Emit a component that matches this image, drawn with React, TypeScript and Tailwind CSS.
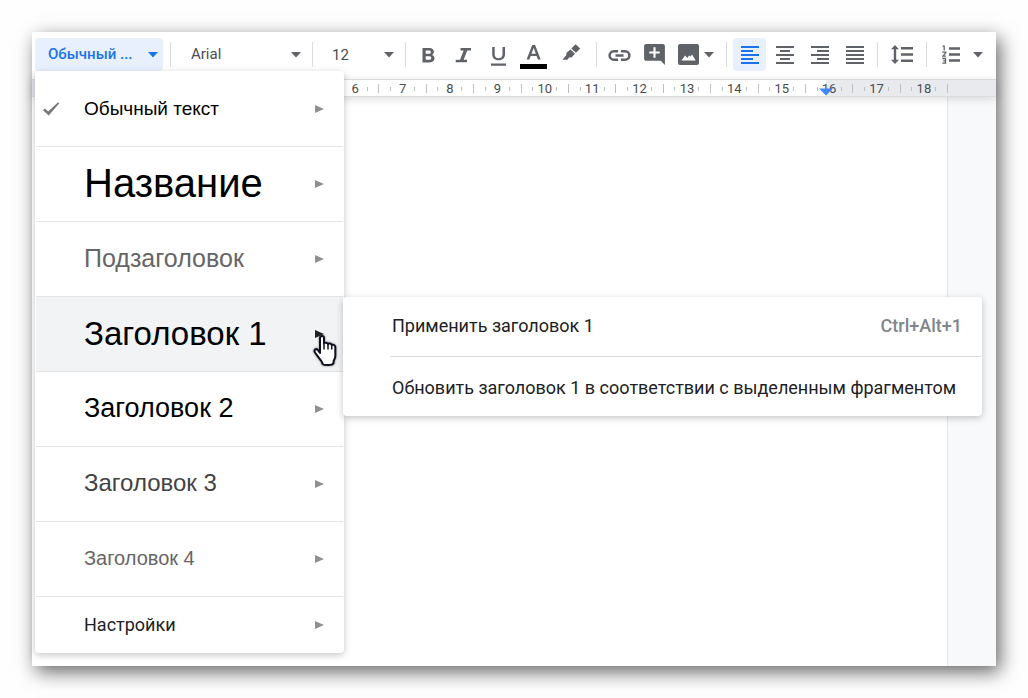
import { useState } from "react";
import type { ReactNode } from "react";
import {
  MdAddComment,
  MdFormatAlignCenter,
  MdFormatAlignJustify,
  MdFormatAlignLeft,
  MdFormatAlignRight,
} from "react-icons/md";

function Caret({ className = "" }: { className?: string }) {
  return (
    <svg width="10" height="6" viewBox="0 0 10 6" className={`shrink-0 ${className}`} aria-hidden="true">
      <path d="M0 0h10L5 5.5z" fill="currentColor" />
    </svg>
  );
}

function Divider() {
  return <span className="h-[25px] w-px shrink-0 bg-[#dadce0]" />;
}

function Group({ label, children }: { label: string; children: ReactNode }) {
  return (
    <div role="group" aria-label={label} className="flex shrink-0 gap-0.5 px-1.5">
      {children}
    </div>
  );
}

function Tool({
  label,
  active = false,
  size = "w-[33px] justify-center",
  children,
}: {
  label: string;
  active?: boolean;
  size?: string;
  children: ReactNode;
}) {
  return (
    <button
      type="button"
      aria-label={label}
      aria-pressed={active}
      className={`flex h-[33px] shrink-0 items-center rounded-sm ${size} ${
        active ? "bg-[#e8f0fe] text-[#1a73e8]" : ""
      }`}
    >
      {children}
    </button>
  );
}

function BoldIcon() {
  return (
    <svg width="24" height="24" viewBox="0 0 24 24" fill="currentColor" aria-hidden="true">
      <path
        fillRule="evenodd"
        d="M5.500 5h7c2.600 0 4.400 1.500 4.400 3.800 0 1.400-.7 2.500-1.800 3.100 1.500.6 2.400 1.800 2.400 3.400 0 2.500-1.900 4.100-4.800 4.100H5.500zm3.200 2.600v3.200h3.400c1.100 0 1.700-.6 1.700-1.600s-.6-1.600-1.700-1.600zm0 5.600v3.600h3.700c1.200 0 1.900-.7 1.900-1.800s-.7-1.800-1.900-1.800z"
      />
    </svg>
  );
}

function ItalicIcon() {
  return (
    <svg width="24" height="24" viewBox="0 0 24 24" fill="currentColor" aria-hidden="true">
      <path d="M8.500 5H19v2.500h-3.800l-3.500 9.300H15v2.500H3.700v-2.500h4.400l3.500-9.300H8.500z" />
    </svg>
  );
}

function UnderlineIcon() {
  return (
    <svg width="24" height="24" viewBox="0 0 24 24" fill="currentColor" aria-hidden="true">
      <path d="M5.200 4h2.500v7.200c0 2.600 1.500 4 3.900 4s3.900-1.400 3.900-4V4H18v7.300c0 3.800-2.500 6-6.400 6s-6.400-2.200-6.400-6zM4 20.500h15v2.200H4z" />
    </svg>
  );
}

function TextColorIcon() {
  return (
    <svg width="27" height="28" viewBox="0 0 27 28" aria-hidden="true">
      <path
        fill="#5f6368"
        fillRule="evenodd"
        d="M12.200 4h2.900l5.600 14.600h-2.800l-1.300-3.600h-5.900l-1.300 3.600H6.600zm1.450 2.900l-2.200 5.900h4.400z"
      />
      <path fill="#000" d="M0 23h27v5H0z" />
    </svg>
  );
}

function HighlightIcon() {
  return (
    <svg width="20" height="17" viewBox="0 0 20 17" fill="currentColor" aria-hidden="true">
      <path d="M14.600.300l4.600 4.300-4.300 4.200-4.600-4.300zM9.400 5.500l4.600 4.300-3.100 3.100c-.7.700-1.800.8-2.600.4l-1.900 2.500H1.400l4-4.900c-.3-.8-.1-1.700.5-2.300z" />
    </svg>
  );
}

function LinkIcon() {
  return (
    <svg width="24" height="24" viewBox="0 0 24 24" fill="none" stroke="currentColor" strokeWidth="2.500" aria-hidden="true">
      <path d="M10.100 8.300H5.800a4.200 4.200 0 0 0 0 8.400h4.300M12.900 8.300h4.300a4.200 4.200 0 0 1 0 8.400h-4.300M7.500 12.500h8" />
    </svg>
  );
}

function ImageIcon() {
  return (
    <svg width="21" height="21" viewBox="0 0 21 21" aria-hidden="true">
      <rect width="21" height="21" rx="2" fill="currentColor" />
      <path d="M3.500 16.500l3.500-5 2.500 2.500L11 11.500l1.500 1 1.500-2 3.700 6z" fill="#fff" />
    </svg>
  );
}

function LineSpacingIcon() {
  return (
    <svg width="22" height="19" viewBox="0 0 22 19" fill="currentColor" aria-hidden="true">
      <path d="M4 0l4 4.300H5.200v10.400H8L4 19l-4-4.300h2.800V4.300H0zM10 2h12v2.400H10zM10 8.300h12v2.400H10zM10 14.600h12V17H10z" />
    </svg>
  );
}

function NumberedListIcon() {
  return (
    <svg width="18" height="19" viewBox="0 0 18 19" fill="currentColor" aria-hidden="true">
      <path d="M7 2.300h11v2.400H7zM7 8.300h11v2.400H7zM7 14.300h11v2.400H7z" />
      <path
        d="M.5 1.200h1.700V5.500M.3 7.200h3.400v.6L.9 11.200h3M.3 13.500h3.200v4.700H.3M1.200 15.900h2.300"
        fill="none"
        stroke="currentColor"
        strokeWidth="1.300"
      />
    </svg>
  );
}

function Toolbar() {
  const [size, setSize] = useState("12");
  return (
    <div
      role="toolbar"
      aria-label="Форматирование"
      className="flex h-[47px] items-center pb-0.5 pl-[3px] text-[15px] text-[#5f6368]"
    >
      <button
        type="button"
        aria-haspopup="menu"
        aria-expanded="true"
        className="mr-[7px] flex h-[33px] w-32 shrink-0 items-center justify-between rounded-sm bg-[#e8f0fe] pl-[13px] pr-[5px] font-medium text-[#1a73e8]"
      >
        Обычный ...
        <Caret />
      </button>
      <Divider />
      <div className="grid w-[141px] shrink-0 items-center">
        <select
          aria-label="Шрифт"
          className="col-start-1 row-start-1 h-[33px] appearance-none bg-transparent pl-5 text-[#4a4d51]"
        >
          <option>Arial</option>
          <option>Roboto</option>
        </select>
        <Caret className="pointer-events-none col-start-1 row-start-1 mr-[11px] justify-self-end" />
      </div>
      <Divider />
      <div className="flex w-[92px] shrink-0 items-center">
        <input
          type="text"
          aria-label="Размер шрифта"
          value={size}
          onChange={(e) => setSize(e.target.value)}
          className="h-[33px] w-[66px] bg-transparent pl-[19px] text-[#4a4d51]"
        />
        <button type="button" aria-label="Выбрать размер" className="flex h-[33px] items-center px-[5px]">
          <Caret />
        </button>
      </div>
      <Divider />
      <Group label="Стиль текста">
        <Tool label="Полужирный"><BoldIcon /></Tool>
        <Tool label="Курсив"><ItalicIcon /></Tool>
        <Tool label="Подчеркнутый"><UnderlineIcon /></Tool>
        <Tool label="Цвет текста" size="w-[33px] justify-center"><TextColorIcon /></Tool>
        <Tool label="Цвет выделения" size="w-[38px] justify-center pb-1"><HighlightIcon /></Tool>
      </Group>
      <Divider />
      <Group label="Вставка">
        <Tool label="Вставить ссылку"><LinkIcon /></Tool>
        <Tool label="Добавить комментарий"><MdAddComment size={25} /></Tool>
        <Tool label="Вставить изображение" size="gap-[5px] pl-[5px] pr-1.5">
          <ImageIcon />
          <Caret />
        </Tool>
      </Group>
      <Divider />
      <Group label="Выравнивание">
        <Tool label="По левому краю" active><MdFormatAlignLeft size={24} /></Tool>
        <Tool label="По центру"><MdFormatAlignCenter size={24} /></Tool>
        <Tool label="По правому краю"><MdFormatAlignRight size={24} /></Tool>
        <Tool label="По ширине"><MdFormatAlignJustify size={24} /></Tool>
      </Group>
      <Divider />
      <Group label="Интервал">
        <Tool label="Межстрочный интервал" size="w-9 justify-center"><LineSpacingIcon /></Tool>
      </Group>
      <Divider />
      <Group label="Списки">
        <Tool label="Нумерованный список" size="gap-[13px] pl-[9px] pr-[5px]">
          <NumberedListIcon />
          <Caret />
        </Tool>
      </Group>
    </div>
  );
}

const numbers = [6, 7, 8, 9, 10, 11, 12, 13, 14, 15, 16, 17, 18];

function Ruler() {
  return (
    <div className="relative z-[1] h-[18px] border-y border-[#dadce0] bg-white shadow-[0_2px_8px_rgba(60,64,67,0.18)]">
      <div className="absolute inset-y-0 right-0 w-[170px] bg-[#e8eaed]" />
      <div className="absolute inset-y-0 left-0 w-4 bg-[#e0e3e8]" />
      <div className="relative flex pl-[300px] pr-12">
        {numbers.map((n) => (
          <div key={n} className="flex flex-1 items-center text-[13px] leading-4 text-[#4a4d51]">
            <span className="flex-1" />
            <span className="h-1 w-px bg-[#bdc1c6]" />
            <span className="w-[23px] pt-px text-center">{n}</span>
            <span className="h-1 w-px bg-[#bdc1c6]" />
            <span className="h-[9px] flex-1 border-r border-[#bdc1c6]" />
          </div>
        ))}
      </div>
      <svg
        width="14"
        height="9"
        viewBox="0 0 14 9"
        className="absolute bottom-0 right-[163px] text-[#4285f4]"
        aria-hidden="true"
      >
        <path d="M0 1.500h14L7 8.500z" fill="currentColor" />
      </svg>
    </div>
  );
}

const styles = [
  { name: "Обычный текст", text: "text-[19px] text-black", checked: true },
  { name: "Название", text: "text-[40px] text-black" },
  { name: "Подзаголовок", text: "text-[25px] text-[#666666]" },
  { name: "Заголовок 1", text: "text-[33px] text-black", open: true },
  { name: "Заголовок 2", text: "text-[27px] text-black" },
  { name: "Заголовок 3", text: "text-[24px] text-[#434343]" },
  { name: "Заголовок 4", text: "text-[20px] text-[#666666]" },
];

function Arrow({ dark = false }: { dark?: boolean }) {
  return (
    <svg
      width="9"
      height="8"
      viewBox="0 0 9 8"
      className={`shrink-0 ${dark ? "text-[#222222]" : "text-[#909090]"}`}
      aria-hidden="true"
    >
      <path d="M0 0l9 4-9 4z" fill="currentColor" />
    </svg>
  );
}

function StyleMenu() {
  return (
    <ul
      role="menu"
      className="absolute left-[3px] top-[39px] z-10 w-[309px] rounded bg-white px-px pt-px font-['Liberation_Sans',sans-serif] shadow-[0_2px_7px_rgba(60,64,67,0.3)]"
    >
      {styles.map((s) => (
        <li key={s.name} role="none" className={`border-b border-[#e3e4e6] ${s.open ? "bg-[#f1f3f4]" : ""}`}>
          <button type="button" role="menuitem" className="flex h-[74px] w-full items-center pl-[7px] pr-[19px]">
            <span className="flex w-[41px] shrink-0">
              {s.checked && (
                <svg width="17" height="14" viewBox="0 0 17 14" aria-hidden="true">
                  <path d="M0 8.300l1.900-1.800 3.300 3L14.800.500l1.700.400L5.700 13.400z" fill="#777" />
                </svg>
              )}
            </span>
            <span className={`grow whitespace-nowrap pb-0.5 text-left leading-none ${s.text}`}>{s.name}</span>
            <Arrow dark={s.open} />
          </button>
        </li>
      ))}
      <li role="none">
        <button
          type="button"
          role="menuitem"
          className="flex h-14 w-full items-center justify-between pl-12 pr-[19px] font-['Roboto',sans-serif] text-[18px] text-[#202124]"
        >
          <span className="pb-0.5">Настройки</span>
          <Arrow />
        </button>
      </li>
    </ul>
  );
}

function HeadingSubmenu() {
  return (
    <div
      role="menu"
      className="absolute left-[311px] top-[265px] z-20 flex w-[639px] flex-col rounded bg-white font-['Roboto',sans-serif] text-[18px] text-[#202124] shadow-[0_2px_7px_rgba(60,64,67,0.3)]"
    >
      <button type="button" role="menuitem" className="flex h-[59px] items-center justify-between pb-0.5 pl-[49px] pr-5">
        <span>Применить заголовок 1</span>
        <span className="font-medium text-[#80868b]">Ctrl+Alt+1</span>
      </button>
      <hr className="ml-[47px] mr-px border-[#dadce0]" />
      <button type="button" role="menuitem" className="flex h-[59px] items-center whitespace-nowrap pl-[49px] pt-0.5">
        Обновить заголовок 1 в соответствии с выделенным фрагментом
      </button>
    </div>
  );
}

function HandPointer() {
  return (
    <svg
      width="24"
      height="32"
      viewBox="0 0 24 32"
      className="absolute left-[281px] top-[303px] z-30 drop-shadow-[0_0_1px_rgba(0,0,0,0.5)]"
      aria-hidden="true"
    >
      <path
        d="M7 18V3.200C7 1.800 7.900 1 9 1s2 .8 2 2.200V8.500c.4-1.200 3.600-1.200 4 .6.700-1 3.400-.7 3.700 1 .9-.8 3.600-.3 3.600 2V21c0 2.600-1.300 3.500-1.800 5.500v1.800c-1.200 2.200-9.400 2.400-11 .5-.3-2.300-1.700-3-3.200-5.500L2 17.500c-1.500-2.700.9-4.300 2.800-2.600z"
        fill="#fff"
        stroke="#101020"
        strokeWidth="2"
        strokeLinejoin="round"
      />
      <path d="M11 8.500v6M15 9v5.500M18.700 10v4.500" stroke="#101020" strokeWidth="1.500" />
    </svg>
  );
}

export default function App() {
  return (
    <main className="flex min-h-screen flex-col bg-[#fefefe] p-8 font-['Roboto',sans-serif]">
      <section className="relative flex grow flex-col bg-white shadow-[4px_6px_18px_rgba(0,0,0,0.6)]">
        <Toolbar />
        <Ruler />
        <div className="flex grow bg-[#f8f9fa]">
          <div className="grow bg-white" />
          <div className="w-[49px] border-l border-[#e3e5e8]" />
        </div>
        <StyleMenu />
        <HeadingSubmenu />
        <HandPointer />
      </section>
    </main>
  );
}
